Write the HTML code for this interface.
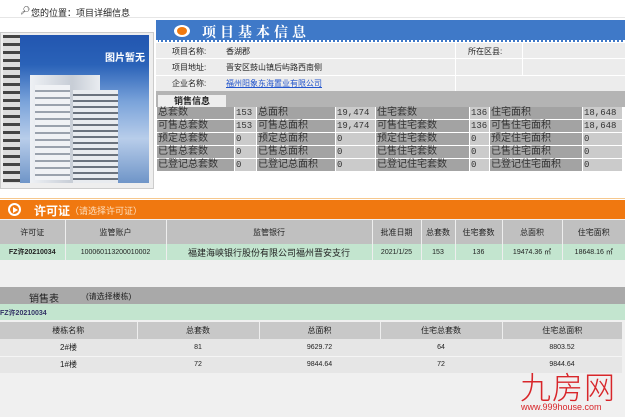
<!DOCTYPE html>
<html><head><meta charset="utf-8"><style>
*{margin:0;padding:0;box-sizing:border-box}
body{width:625px;height:417px;overflow:hidden;background:#fff;font-family:"Liberation Sans","Noto Sans CJK SC",sans-serif;font-size:9px;color:#222;position:relative}
.a{position:absolute}
.sr div{position:absolute;height:12px;line-height:12px;font-size:10px;padding-left:1px;font-family:"Liberation Sans","Noto Sans CJK SC",sans-serif;color:#333}
.d{background:#a3a3a3}.l{background:#cbcbcb}
.l{font-family:"Liberation Mono","Noto Sans CJK SC",monospace!important;font-size:9px!important}
table{border-collapse:collapse;position:absolute;table-layout:fixed}
td{text-align:center;font-size:8px;padding:0}
</style></head><body>
<div class="a" style="left:20px;top:6px;font-size:8px">&#x1F50E;&#xFE0E;</div>
<div class="a" style="left:31px;top:6px;font-size:9px">您的位置：项目详细信息</div>
<div class="a" style="left:0;top:17px;width:625px;height:1px;background:#e6e6e6"></div>
<!-- image -->
<div class="a" style="left:0;top:32px;width:154px;height:157px;background:#eee;border:1px solid #ccc"></div>
<div class="a" style="left:3px;top:35px;width:146px;height:148px;background:linear-gradient(#2256b0 0,#2a62b8 20%,#7aa3da 45%,#b8cdea 70%,#6f95c8 100%);overflow:hidden">
<div class="a" style="left:27px;top:40px;width:70px;height:110px;background:linear-gradient(90deg,#eef1f5,#c7cdd6 60%,#e9ecf0)"></div>
<div class="a" style="left:70px;top:55px;width:45px;height:95px;background:repeating-linear-gradient(#e8ebef 0 4px,#6b737e 4px 6px)"></div>
<div class="a" style="left:32px;top:50px;width:35px;height:95px;background:repeating-linear-gradient(#f0f2f5 0 5px,#9aa2ad 5px 7px)"></div>
<div class="a" style="left:0;top:0;width:17px;height:148px;background:repeating-linear-gradient(#444 0 3px,#ddd 3px 8px)"></div>
<div class="a" style="right:4px;top:14px;color:#fff;font-weight:bold;font-size:10px">图片暂无</div>
</div>
<!-- blue header -->
<div class="a" style="left:156px;top:20px;width:469px;height:22px;background:#3f79c8;border-bottom:2px dotted #fff"></div>
<div class="a" style="left:174px;top:25px;width:16px;height:12px;border-radius:50%;background:#fff"></div>
<div class="a" style="left:177px;top:27px;width:10px;height:8px;border-radius:50%;background:#f07a10"></div>
<div class="a" style="left:202px;top:22px;color:#fff;font-weight:bold;font-size:14px;letter-spacing:4px;font-family:'Liberation Serif','Noto Serif CJK SC',serif">项目基本信息</div>
<!-- info rows -->
<div class="a" style="left:156px;top:43px;width:469px;height:48px;background:#ececec"></div>
<div class="a" style="left:156px;top:58px;width:469px;height:1px;background:#fff"></div>
<div class="a" style="left:156px;top:75px;width:469px;height:1px;background:#fff"></div>
<div class="a" style="left:455px;top:43px;width:1px;height:48px;background:#fff"></div>
<div class="a" style="left:522px;top:43px;width:1px;height:32px;background:#fff"></div>
<div class="a" style="left:172px;top:46px;font-size:8px">项目名称:</div>
<div class="a" style="left:226px;top:46px;font-size:8px">香湖郡</div>
<div class="a" style="left:468px;top:46px;font-size:8px">所在区县:</div>
<div class="a" style="left:172px;top:62px;font-size:8px">项目地址:</div>
<div class="a" style="left:226px;top:62px;font-size:8px">晋安区鼓山镇后屿路西南侧</div>
<div class="a" style="left:172px;top:78px;font-size:8px">企业名称:</div>
<div class="a" style="left:226px;top:78px;font-size:8px;color:#2255cc;text-decoration:underline">福州阳象东海置业有限公司</div>
<!-- sales -->
<div class="a" style="left:156px;top:91px;width:469px;height:16px;background:#b4b4b4"></div>
<div class="a" style="left:158px;top:95px;width:68px;height:12px;background:#eee;font-weight:bold;font-size:9px;text-align:center;line-height:12px">销售信息</div>
<div class="sr">
<div class="d" style="left:157px;top:107px;width:77px">总套数</div><div class="l" style="left:235px;top:107px;width:21px">153</div><div class="d" style="left:257px;top:107px;width:78px">总面积</div><div class="l" style="left:336px;top:107px;width:39px">19,474</div><div class="d" style="left:376px;top:107px;width:93px">住宅套数</div><div class="l" style="left:470px;top:107px;width:19px">136</div><div class="d" style="left:490px;top:107px;width:92px">住宅面积</div><div class="l" style="left:583px;top:107px;width:39px">18,648</div>
<div class="d" style="left:157px;top:120px;width:77px">可售总套数</div><div class="l" style="left:235px;top:120px;width:21px">153</div><div class="d" style="left:257px;top:120px;width:78px">可售总面积</div><div class="l" style="left:336px;top:120px;width:39px">19,474</div><div class="d" style="left:376px;top:120px;width:93px">可售住宅套数</div><div class="l" style="left:470px;top:120px;width:19px">136</div><div class="d" style="left:490px;top:120px;width:92px">可售住宅面积</div><div class="l" style="left:583px;top:120px;width:39px">18,648</div>
<div class="d" style="left:157px;top:133px;width:77px">预定总套数</div><div class="l" style="left:235px;top:133px;width:21px">0</div><div class="d" style="left:257px;top:133px;width:78px">预定总面积</div><div class="l" style="left:336px;top:133px;width:39px">0</div><div class="d" style="left:376px;top:133px;width:93px">预定住宅套数</div><div class="l" style="left:470px;top:133px;width:19px">0</div><div class="d" style="left:490px;top:133px;width:92px">预定住宅面积</div><div class="l" style="left:583px;top:133px;width:39px">0</div>
<div class="d" style="left:157px;top:146px;width:77px">已售总套数</div><div class="l" style="left:235px;top:146px;width:21px">0</div><div class="d" style="left:257px;top:146px;width:78px">已售总面积</div><div class="l" style="left:336px;top:146px;width:39px">0</div><div class="d" style="left:376px;top:146px;width:93px">已售住宅套数</div><div class="l" style="left:470px;top:146px;width:19px">0</div><div class="d" style="left:490px;top:146px;width:92px">已售住宅面积</div><div class="l" style="left:583px;top:146px;width:39px">0</div>
<div class="d" style="left:157px;top:159px;width:77px">已登记总套数</div><div class="l" style="left:235px;top:159px;width:21px">0</div><div class="d" style="left:257px;top:159px;width:78px">已登记总面积</div><div class="l" style="left:336px;top:159px;width:39px">0</div><div class="d" style="left:376px;top:159px;width:93px">已登记住宅套数</div><div class="l" style="left:470px;top:159px;width:19px">0</div><div class="d" style="left:490px;top:159px;width:92px">已登记住宅面积</div><div class="l" style="left:583px;top:159px;width:39px">0</div>
</div>
<!-- orange -->
<div class="a" style="left:0;top:198px;width:625px;height:1px;background:#f6c88e"></div>
<div class="a" style="left:0;top:200px;width:625px;height:19px;background:#f07810"></div>
<div class="a" style="left:8px;top:203px;width:13px;height:13px;border-radius:50%;border:2px solid #fff"></div>
<div class="a" style="left:13px;top:207px;width:0;height:0;border-left:5px solid #fff;border-top:3px solid transparent;border-bottom:3px solid transparent"></div>
<div class="a" style="left:34px;top:202px;color:#fff;font-weight:bold;font-size:12px">许可证</div>
<div class="a" style="left:70px;top:204px;color:#fde0c0;font-size:9px">（请选择许可证）</div>
<div class="a" style="left:0;top:219px;width:625px;height:198px;background:#f0f0f0"></div>
<table style="left:0;top:220px;width:625px">
<colgroup><col style="width:65px"><col style="width:101px"><col style="width:206px"><col style="width:49px"><col style="width:34px"><col style="width:47px"><col style="width:60px"><col style="width:63px"></colgroup>
<tr style="height:24px;background:#c0c0c0"><td style="border-right:1px solid #eee">许可证</td><td style="border-right:1px solid #eee">监管账户</td><td style="border-right:1px solid #eee">监管银行</td><td style="border-right:1px solid #eee">批准日期</td><td style="border-right:1px solid #eee">总套数</td><td style="border-right:1px solid #eee">住宅套数</td><td style="border-right:1px solid #eee">总面积</td><td>住宅面积</td></tr>
<tr style="height:16px;background:#c3e5cf"><td style="font-weight:bold;font-size:7px;border-right:1px solid #eee">FZ许20210034</td><td style="font-size:7px;border-right:1px solid #eee">100060113200010002</td><td style="font-size:9px;border-right:1px solid #eee">福建海峡银行股份有限公司福州晋安支行</td><td style="font-size:7px;border-right:1px solid #eee">2021/1/25</td><td style="font-size:7px;border-right:1px solid #eee">153</td><td style="font-size:7px;border-right:1px solid #eee">136</td><td style="font-size:7px;border-right:1px solid #eee">19474.36 ㎡</td><td style="font-size:7px">18648.16 ㎡</td></tr>
</table>
<div class="a" style="left:0;top:287px;width:625px;height:17px;background:#a9a9a9"></div>
<div class="a" style="left:29px;top:290px;font-size:10px">销售表</div>
<div class="a" style="left:86px;top:291px;font-size:8px">(请选择楼栋)</div>
<div class="a" style="left:0;top:304px;width:625px;height:16px;background:#c3e5cf"></div>
<div class="a" style="left:0;top:308px;font-size:7px;color:#336;font-weight:bold">FZ许20210034</div>
<table style="left:0;top:322px;width:622px">
<colgroup><col style="width:137px"><col style="width:122px"><col style="width:121px"><col style="width:122px"><col style="width:120px"></colgroup>
<tr style="height:17px;background:#c8c8c8;font-size:8px"><td style="border-right:1px solid #eee">楼栋名称</td><td style="border-right:1px solid #eee">总套数</td><td style="border-right:1px solid #eee">总面积</td><td style="border-right:1px solid #eee">住宅总套数</td><td>住宅总面积</td></tr>
<tr style="height:17px;background:#e6e6e6;border-bottom:1px solid #f5f5f5"><td>2#楼</td><td style="font-size:7px">81</td><td style="font-size:7px">9629.72</td><td style="font-size:7px">64</td><td style="font-size:7px">8803.52</td></tr>
<tr style="height:17px;background:#e6e6e6"><td>1#楼</td><td style="font-size:7px">72</td><td style="font-size:7px">9844.64</td><td style="font-size:7px">72</td><td style="font-size:7px">9844.64</td></tr>
</table>
<div class="a" style="left:520px;top:370px;color:#d8262a;font-size:31px;letter-spacing:1px;line-height:32px;font-family:'Noto Sans CJK SC',sans-serif;font-weight:300">九房网</div>
<div class="a" style="left:521px;top:402px;color:#d8262a;font-size:9px">www.999house.com</div>
</body></html>
